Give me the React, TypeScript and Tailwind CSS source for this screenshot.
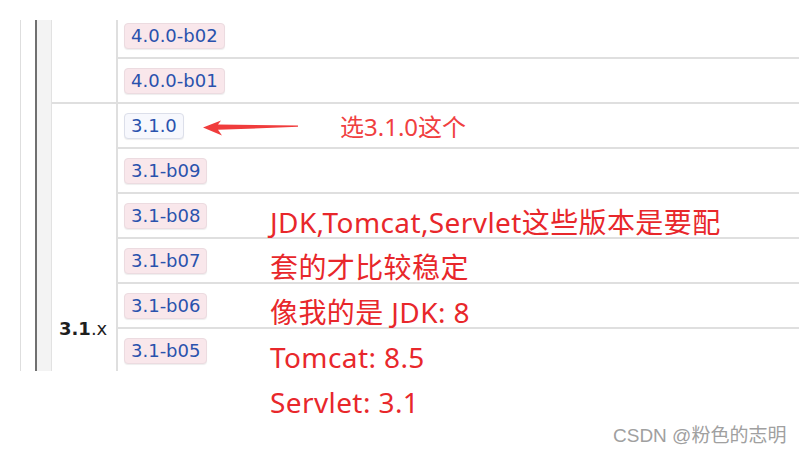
import React from "react";

type Row = { label: string; current?: boolean };

// rows below the fold are only spacers, so the group label stays centred
const groups: { name?: React.ReactNode; rows: Row[]; hiddenRows: number }[] = [
  {
    rows: [{ label: "4.0.0-b02" }, { label: "4.0.0-b01" }],
    hiddenRows: 0,
  },
  {
    name: (
      <>
        <span className="font-bold">3.1</span>.x
      </>
    ),
    rows: [
      { label: "3.1.0", current: true },
      { label: "3.1-b09" },
      { label: "3.1-b08" },
      { label: "3.1-b07" },
      { label: "3.1-b06" },
      { label: "3.1-b05" },
    ],
    hiddenRows: 4,
  },
];

const VersionBadge = ({ row }: { row: Row }) => (
  <span
    className={
      row.current
        ? "rounded-[4px] border border-[#dcdfea] bg-[#f7f8fd] px-[6px] py-[2px] text-[18px] leading-[20px] text-[#2952ad] shadow-[0_1px_1px_rgba(0,0,0,0.07)]"
        : "rounded-[4px] border border-[#ecdbe0] bg-[#f9e7eb] px-[6px] py-[2px] text-[18px] leading-[20px] text-[#2952ad] shadow-[0_1px_1px_rgba(0,0,0,0.07)]"
    }
  >
    {row.label}
  </span>
);

const Arrow = () => (
  <svg width="96" height="17" viewBox="0 0 96 17" className="absolute left-[203px] top-[119px]">
    <polygon points="0,8.5 18,1.5 15,5.6 95,6.4 95,7.8 15,10.8 19,16.5" fill="#f03c3c" />
  </svg>
);

export default function App() {
  return (
    <div
      className="relative h-[456px] w-[799px] overflow-hidden bg-white"
      style={{ fontFamily: '"DejaVu Sans", Verdana, sans-serif' }}
    >
      {/* table */}
      <div className="mt-[20px] flex h-[351px] overflow-hidden">
        <div className="ml-[20px] w-[1px] bg-[#dedede]" />
        <div className="w-[14px]" />
        <div className="w-[2px] bg-[#707070]" />
        <div className="w-[15px] border-r border-[#e2e2e2] bg-[#f3f3f3]" />
        <div className="-mt-[6px] flex flex-1 flex-col">
          {groups.map((g, gi) => (
            <div key={gi} className={gi > 0 ? "flex border-t-2 border-[#dfdfdf]" : "flex"}>
              <div className="flex w-[64px] shrink-0 items-center pl-[7px] text-[18px] text-[#1e1e1e]">
                {g.name}
              </div>
              <div className="w-[2px] bg-[#dfdfdf]" />
              <div className="flex flex-1 flex-col">
                {g.rows.map((r, ri) => (
                  <div
                    key={r.label}
                    className={
                      ri > 0
                        ? "flex h-[45px] items-center border-t-2 border-[#dfdfdf] pl-[6px]"
                        : "flex h-[43px] items-center pl-[6px]"
                    }
                  >
                    <VersionBadge row={r} />
                  </div>
                ))}
                {Array.from({ length: g.hiddenRows }).map((_, i) => (
                  <div key={i} className="h-[45px] border-t-2 border-[#dfdfdf]" />
                ))}
              </div>
            </div>
          ))}
        </div>
      </div>

      {/* annotations */}
      <Arrow />
      <div
        className="absolute left-[340px] top-[110px] text-[24px] leading-[34px] text-[#f0403f]"
        style={{ fontFamily: '"Noto Sans", "Noto Sans CJK SC", sans-serif' }}
      >
        选3.1.0这个
      </div>
      <div
        className="absolute left-[270px] top-[200px] text-[28px] leading-[45px] tracking-[0.4px] text-[#e8272b]"
        style={{ fontFamily: '"Noto Sans", "Noto Sans CJK SC", sans-serif' }}
      >
        <div>JDK,Tomcat,Servlet这些版本是要配</div>
        <div>套的才比较稳定</div>
        <div>像我的是 JDK: 8</div>
        <div>Tomcat: 8.5</div>
        <div>Servlet: 3.1</div>
      </div>
      <div
        className="absolute left-[613px] top-[423px] text-[19px] leading-[26px] text-[#a0a0a0]"
        style={{ fontFamily: '"Liberation Sans", "Noto Sans CJK SC", sans-serif' }}
      >
        CSDN @粉色的志明
      </div>
    </div>
  );
}
